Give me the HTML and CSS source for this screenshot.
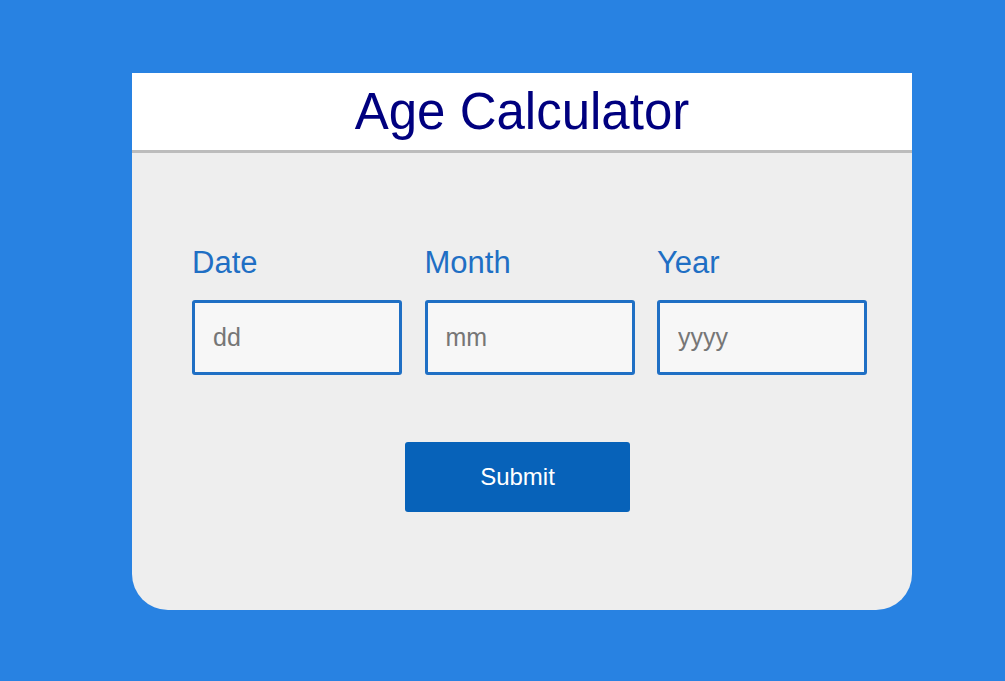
FILE: index.html
```html
<!DOCTYPE html>
<html lang="en">
<head>
<meta charset="utf-8">
<title>Age Calculator</title>
<link rel="stylesheet" href="styles.css">
</head>
<body>
<main class="page">
  <section class="card">
    <header class="card-header">
      <h1 class="title">Age Calculator</h1>
    </header>
    <form class="card-body">
      <div class="fields">
        <div class="field">
          <label class="label" for="d">Date</label>
          <input class="input" id="d" type="text" placeholder="dd">
        </div>
        <div class="field">
          <label class="label" for="m">Month</label>
          <input class="input" id="m" type="text" placeholder="mm">
        </div>
        <div class="field">
          <label class="label" for="y">Year</label>
          <input class="input" id="y" type="text" placeholder="yyyy">
        </div>
      </div>
      <div class="actions">
        <button class="submit" type="button">Submit</button>
      </div>
    </form>
  </section>
</main>
</body>
</html>
```
FILE: styles.css
```css
html, body {
  margin: 0;
  padding: 0;
  background: #2882e2;
  font-family: "Liberation Sans", Arial, sans-serif;
}

.page {
  padding: 73px 0 0 132px;
  min-height: 608px;
}

.card {
  width: 780px;
  background: #eeeeee;
  border-radius: 0 0 36px 36px;
  overflow: hidden;
}

.card-header {
  height: 77px;
  background: #ffffff;
  border-bottom: 3px solid #bcbcbc;
  display: flex;
  align-items: center;
  justify-content: center;
}

.title {
  margin: 0;
  font-size: 51px;
  font-weight: normal;
  color: #00007f;
}

.card-body {
  padding: 92px 0 98px 60px;
  margin: 0;
}

.fields {
  display: flex;
  gap: 22.5px;
}

.field {
  display: flex;
  flex-direction: column;
  width: 210px;
}

.label {
  font-size: 31px;
  color: #1f6fc4;
  margin-bottom: 19px;
}

.input {
  box-sizing: border-box;
  width: 210px;
  height: 75px;
  border: 3px solid #1f6fc4;
  border-radius: 3px;
  background: #f7f7f7;
  padding: 0 0 0 18px;
  font-family: "Liberation Sans", Arial, sans-serif;
  font-size: 25px;
  color: #333333;
  outline: none;
}

.input::placeholder {
  color: #767676;
}

.actions {
  display: flex;
  padding-left: 213px;
  margin-top: 67px;
}

.submit {
  width: 225px;
  height: 70px;
  border: none;
  border-radius: 3px;
  background: #0762b9;
  color: #ffffff;
  font-family: "Liberation Sans", Arial, sans-serif;
  font-size: 24px;
  cursor: pointer;
}
```
